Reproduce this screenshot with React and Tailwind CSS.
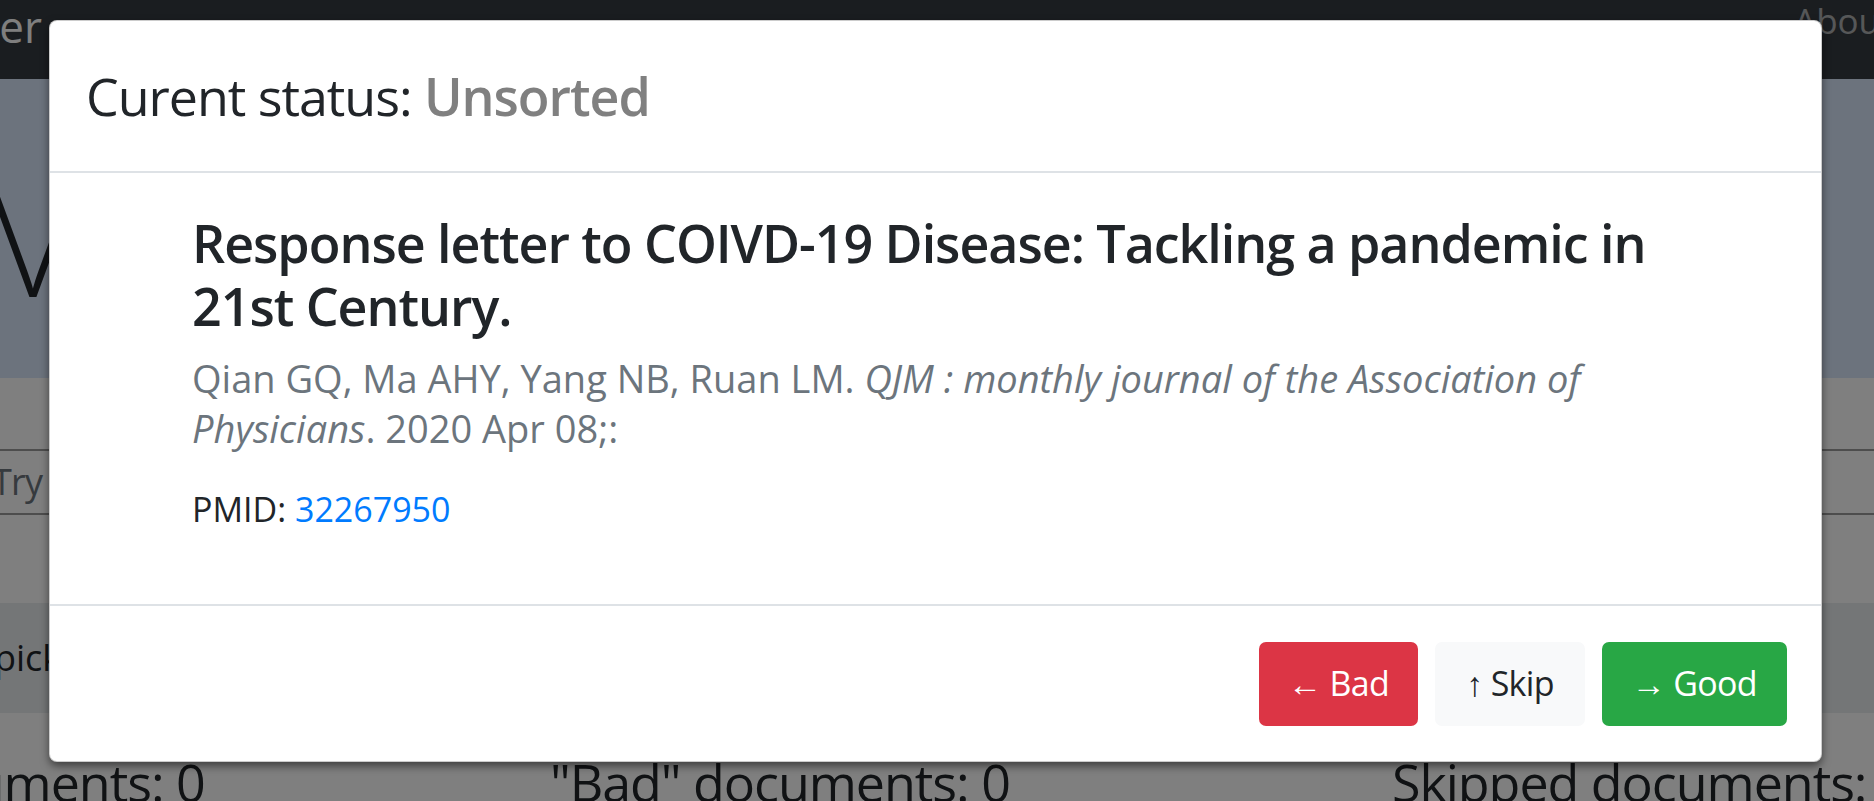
import React from 'react';

const StatusModal = () => (
    <div className="absolute left-[49px] top-[20px] w-[1773px] rounded-[8px] border border-black/20 bg-white shadow-[0_4px_8px_rgba(0,0,0,0.5)]">
        {/* header */}
        <div className="flex h-[152px] items-center border-b-2 border-[#dee2e6] pl-[36px]">
            <h5 className="text-[52px] leading-[1.2] tracking-[-0.02em] text-[#212529]">
                Curent status: <span className="font-semibold text-[#808080]">Unsorted</span>
            </h5>
        </div>

        {/* body */}
        <div className="h-[431px] px-[142px] pt-[38px]">
            <h3 className="text-[52px] font-semibold leading-[63px] tracking-[-0.02em] text-[#212529]">
                Response letter to COIVD-19 Disease: Tackling a pandemic in 21st Century.
            </h3>
            <p className="mt-[16px] text-[38px] leading-[50px] text-[#6c757d]">
                Qian GQ, Ma AHY, Yang NB, Ruan LM. <em>QJM : monthly journal of the Association of Physicians</em>. 2020 Apr 08;:
            </p>
            <p className="mt-[31px] text-[34px] leading-[50px] text-[#212529]">
                PMID: <a className="text-[#007bff]">32267950</a>
            </p>
        </div>

        {/* footer */}
        <div className="flex h-[157px] items-center justify-end gap-[17px] border-t-2 border-[#dee2e6] pr-[34px]">
            <button className="flex h-[84px] items-center rounded-[7px] bg-[#dc3545] px-[29px] text-[34px] tracking-[-0.02em] text-white">
                ← Bad
            </button>
            <button className="flex h-[84px] items-center rounded-[7px] bg-[#f8f9fa] px-[31px] text-[34px] tracking-[-0.02em] text-[#212529]">
                ↑ Skip
            </button>
            <button className="flex h-[84px] items-center rounded-[7px] bg-[#28a745] px-[30px] text-[34px] tracking-[-0.02em] text-white">
                → Good
            </button>
        </div>
    </div>
);

export default function App() {
    return (
        <div className="relative h-[801px] overflow-hidden bg-white font-['Open_Sans',sans-serif] text-[#212529]">
            {/* page behind the dialog */}
            <nav className="flex h-[79px] items-start bg-[#343a40]">
                <div className="mt-[4px] flex w-[42px] justify-end whitespace-nowrap text-[44px] leading-none text-white">
                    Paper Sorter
                </div>
                <div className="flex-1" />
                <div className="mt-[3px] w-[80px] whitespace-nowrap text-[35px] leading-none text-white/60">
                    About
                </div>
            </nav>

            <div className="h-[299px] bg-[#d9e6fa] pt-[94px]">
                <div className="flex w-[66px] justify-center whitespace-nowrap text-[140px] font-light leading-none text-[#212529]">
                    V
                </div>
            </div>

            <div className="h-[225px] pt-[71px]">
                <div className="flex h-[66px] items-center border-y-2 border-[#9a9a9a] whitespace-nowrap text-[36px] text-[#6c757d]">
                    <span className="-ml-[8px] tracking-[-0.02em]">Try searching</span>
                </div>
            </div>

            <div className="flex h-[110px] items-center bg-[#e9ecef] text-[36px] whitespace-nowrap">
                <span className="-ml-[6px]">pick a topic</span>
            </div>

            <div className="-ml-[292px] grid w-[2526px] grid-cols-3 pt-[43px] text-[52px] leading-none tracking-[-0.02em] whitespace-nowrap">
                <div>"Good" documents: 0</div>
                <div>"Bad" documents: 0</div>
                <div>Skipped documents: 0</div>
            </div>

            <div className="absolute inset-0 bg-black/50" />

            <StatusModal />
        </div>
    );
}
